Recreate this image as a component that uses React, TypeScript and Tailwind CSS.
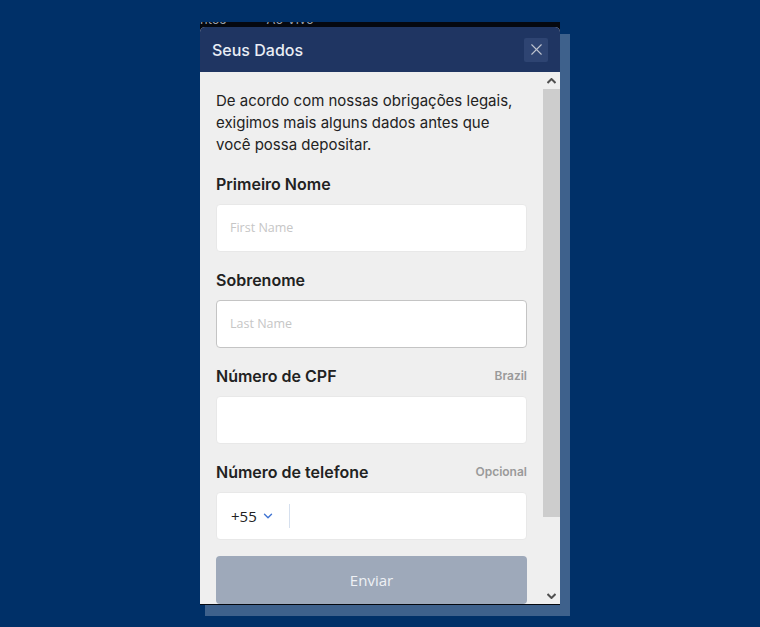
import { ChevronDown, X } from "lucide-react";

function Rotulo({ texto, extra }: { texto: string; extra?: string }) {
  return (
    <div className="flex h-[20px] items-center justify-between">
      <span className="text-[16px] font-semibold text-[#222]">{texto}</span>
      {extra && <span className="text-[12px] font-semibold text-[#9a9a9a]">{extra}</span>}
    </div>
  );
}

function Campo({
  rotulo,
  extra,
  placeholder,
  destaque,
}: {
  rotulo: string;
  extra?: string;
  placeholder?: string;
  destaque?: boolean;
}) {
  return (
    <div className="mt-[18px]">
      <Rotulo texto={rotulo} extra={extra} />
      <div
        className={`mt-[10px] flex h-[48px] items-center rounded-[4px] border bg-white pl-[13px] ${
          destaque ? "border-[#c4c4c4]" : "border-[#e8e8e8]"
        }`}
      >
        <span className="font-['Open_Sans',sans-serif] text-[12.5px] text-[#c6c6c6]">
          {placeholder}
        </span>
      </div>
    </div>
  );
}

function BarraRolagem() {
  return (
    <div className="flex w-[17px] flex-col bg-[#efefef]">
      <div className="flex h-[17px] items-center justify-center">
        <svg width="9" height="6" viewBox="0 0 9 6">
          <path d="M0.5 5 L4.5 1 L8.5 5" fill="none" stroke="#505050" strokeWidth="2" />
        </svg>
      </div>
      <div className="h-[428px] bg-[#cdcdcd]" />
      <div className="flex-1" />
      <div className="flex h-[17px] items-center justify-center">
        <svg width="9" height="6" viewBox="0 0 9 6">
          <path d="M0.5 1 L4.5 5 L8.5 1" fill="none" stroke="#505050" strokeWidth="2" />
        </svg>
      </div>
    </div>
  );
}

function App() {
  return (
    <div className="relative h-[627px] w-full overflow-hidden bg-[#003068] font-['Inter',sans-serif]">
      {/* painel atrás do modal */}
      <div className="absolute left-[205px] top-[34px] h-[582px] w-[365px] bg-[#3e618c]" />
      <div className="absolute left-[200px] top-[22px] h-[583px] w-[360px] bg-[#05080f]">
        <div className="relative h-[5px] overflow-hidden">
          <div className="absolute -top-[12px] left-0 flex gap-[40px] text-[13px] leading-[18px] text-[#9aa1ad]">
            <span>ntos</span>
            <span>Ao Vivo</span>
          </div>
        </div>
      </div>

      <div className="absolute left-[200px] top-[27px] flex h-[577px] w-[360px] flex-col overflow-hidden rounded-t-[5px] bg-[#efefef]">
        <div className="flex h-[45px] items-center justify-between bg-[#1f3562] pl-[12px] pr-[12px]">
          <span className="text-[16px] font-medium text-[#e9edf5]">Seus Dados</span>
          <button className="flex h-[24px] w-[24px] items-center justify-center rounded-[2px] bg-[#2e4472]">
            <X size={19} strokeWidth={1.4} color="#bcc2ce" />
          </button>
        </div>

        <div className="flex flex-1 overflow-hidden">
          <div className="flex-1 overflow-hidden pl-[16px] pr-[16px] pt-[18px]">
            <p className="text-[15px] leading-[22px] text-[#222]">
              De acordo com nossas obrigações legais,
              <br />
              exigimos mais alguns dados antes que
              <br />
              você possa depositar.
            </p>

            <Campo rotulo="Primeiro Nome" placeholder="First Name" />
            <Campo rotulo="Sobrenome" placeholder="Last Name" destaque />
            <Campo rotulo="Número de CPF" extra="Brazil" />

            <div className="mt-[18px]">
              <Rotulo texto="Número de telefone" extra="Opcional" />
              <div className="mt-[10px] flex h-[48px] items-center rounded-[4px] border border-[#e8e8e8] bg-white pl-[14px]">
                <span className="font-['Open_Sans',sans-serif] text-[15px] text-[#222]">+55</span>
                <ChevronDown size={14} strokeWidth={2.4} color="#3f73d2" className="ml-[4px]" />
                <div className="ml-[14px] h-[24px] w-px bg-[#d6e0ee]" />
              </div>
            </div>

            <button className="mt-[16px] flex h-[48px] w-full items-center justify-center rounded-[4px] bg-[#9ea9ba] font-['Open_Sans',sans-serif] text-[15px] text-[#eef1f5]">
              Enviar
            </button>
          </div>
          <BarraRolagem />
        </div>
      </div>
    </div>
  );
}

export default App;
